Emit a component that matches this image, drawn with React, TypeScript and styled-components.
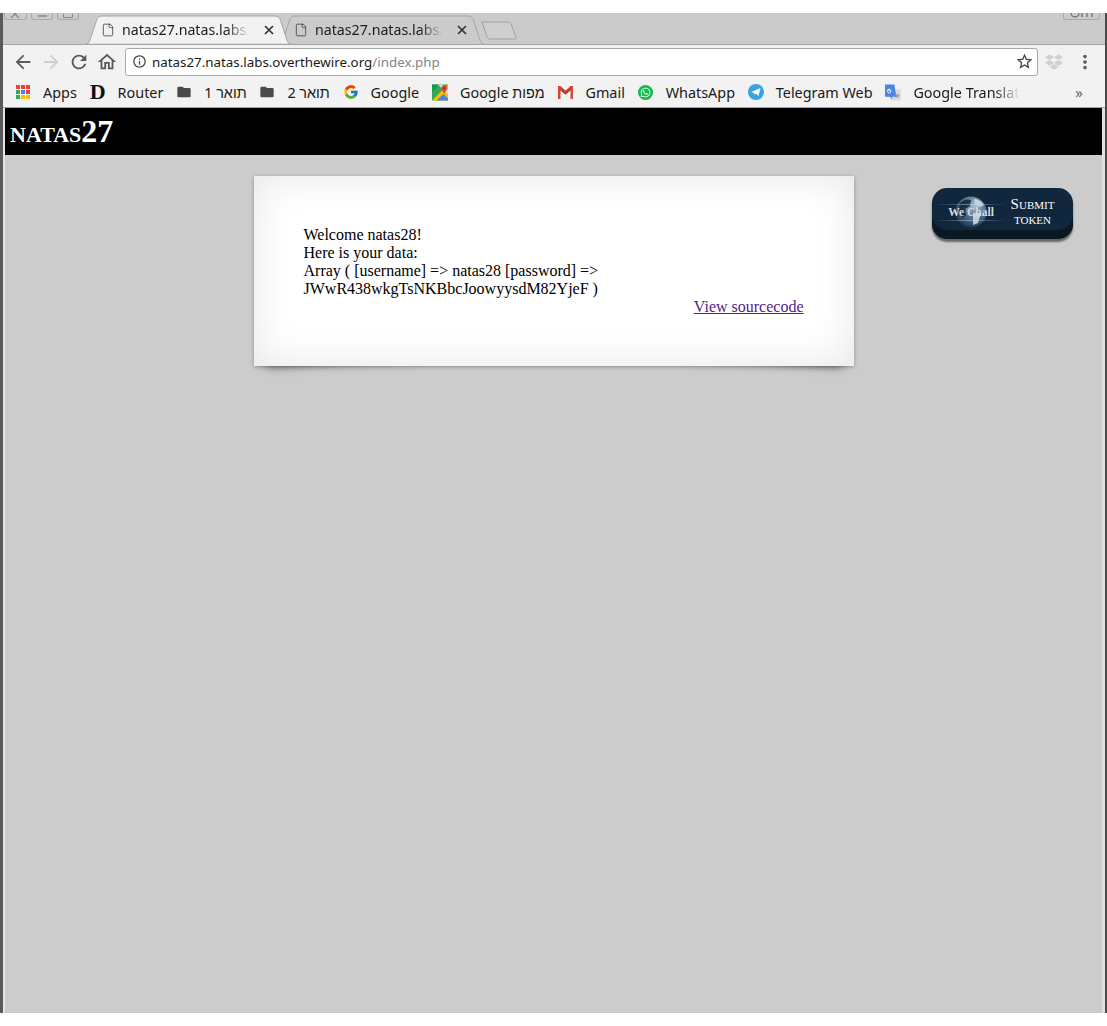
import styled, { createGlobalStyle } from "styled-components";
import { ReactNode } from "react";
import {
  MdArrowBack,
  MdArrowForward,
  MdRefresh,
  MdOutlineHome,
  MdStarBorder,
  MdInfoOutline,
  MdFolder,
  MdMoreVert,
} from "react-icons/md";
import { FcGoogle } from "react-icons/fc";
import { FaWhatsapp, FaDropbox } from "react-icons/fa";
import { LuFile } from "react-icons/lu";

const GlobalStyle = createGlobalStyle`
  html, body {
    margin: 0;
    padding: 0;
    background: #fff;
  }
`;

const Screen = styled.div`
  width: 1107px;
  height: 1026px;
  padding-top: 13px;
  box-sizing: border-box;
  background: #fff;
  overflow: hidden;
`;

const Win = styled.div`
  height: 1000px;
  display: flex;
  flex-direction: column;
  box-sizing: border-box;
  background: #cbcbcb;
  border-left: 3px solid #5a5a5a;
  border-right: 2px solid #4a4a4a;
  font-family: "Noto Sans", "Liberation Sans", sans-serif;
  color: #1a1a1a;
`;

const TabStrip = styled.div`
  height: 31px;
  flex: none;
  display: flex;
  align-items: flex-start;
`;

const Controls = styled.div`
  display: flex;
  gap: 4px;
  margin-left: 1px;
  width: 82px;
  flex: none;
`;

const CtrlBox = styled.div<{ $w: number }>`
  width: ${(p) => p.$w}px;
  height: 7px;
  box-sizing: border-box;
  border: 1px solid #a9a9a9;
  border-top: none;
  border-radius: 0 0 3px 3px;
  display: flex;
  justify-content: center;
  align-items: flex-end;
  overflow: hidden;
  color: #777;
`;

const RightCtrlBox = styled(CtrlBox)`
  margin-left: auto;
  margin-right: 5px;
`;

const TabShape = styled.svg`
  position: absolute;
  left: 0;
  top: 0;
  width: 100%;
  height: 100%;
  z-index: -1;
`;

const Tab = styled.div<{ $active?: boolean }>`
  position: relative;
  z-index: ${(p) => (p.$active ? 2 : 1)};
  width: 205px;
  height: 29px;
  flex: none;
  margin-top: 2px;
  margin-left: ${(p) => (p.$active ? 0 : -12)}px;
  padding-left: 15px;
  box-sizing: border-box;
  display: flex;
  align-items: center;
  isolation: isolate;
  color: #333;
`;

const TabTitle = styled.span`
  width: 132px;
  margin-left: 7px;
  overflow: hidden;
  white-space: nowrap;
  font-size: 14.2px;
  color: #1c1c1c;
  mask-image: linear-gradient(to right, #000 104px, transparent 128px);
`;

const TabClose = styled.svg`
  width: 10px;
  height: 10px;
  margin-left: 10px;
`;

const NewTab = styled.svg`
  width: 36px;
  height: 19px;
  flex: none;
  margin-top: 8px;
  margin-left: -3px;
`;

const Toolbar = styled.div`
  height: 32px;
  flex: none;
  display: flex;
  align-items: center;
  box-sizing: border-box;
  padding: 2px 0 0 6px;
  background: #f2f2f2;
  border-top: 1px solid #a6a6a6;
  color: #5a5a5a;
  position: relative;
  z-index: 0;
`;

const NavBtn = styled.div<{ $off?: boolean }>`
  width: 28px;
  height: 26px;
  flex: none;
  display: flex;
  align-items: center;
  justify-content: center;
  font-size: 22px;
  color: ${(p) => (p.$off ? "#d0d0d0" : "#5a5a5a")};
`;

const Omnibox = styled.div`
  width: 913px;
  height: 28px;
  margin-left: 4px;
  flex: none;
  box-sizing: border-box;
  background: #fff;
  border: 1px solid #a9a9a9;
  border-radius: 3px;
  display: flex;
  align-items: center;
  padding: 0 3px 0 6px;
  font-size: 13.35px;
  color: #1a1a1a;
`;

const Host = styled.span`
  margin-left: 5px;
`;

const Path = styled.span`
  color: #80868b;
  flex: 1;
`;

const ExtBtn = styled(NavBtn)`
  margin-left: 2px;
  font-size: 18px;
`;

const MenuBtn = styled(NavBtn)`
  margin-left: 3px;
  font-size: 22px;
  color: #5f5f5f;
`;

const Bookmarks = styled.div`
  height: 32px;
  flex: none;
  display: flex;
  align-items: center;
  box-sizing: border-box;
  padding: 1px 0 0 12px;
  background: #f2f2f2;
  border-bottom: 1px solid #a0a0a0;
`;

const Mark = styled.div`
  display: flex;
  align-items: center;
  gap: 12px;
  margin-right: 12.8px;
  flex: none;
  font-size: 14.4px;
  white-space: nowrap;
`;

const MarkIcon = styled.span<{ $color?: string }>`
  width: 16px;
  height: 16px;
  flex: none;
  display: flex;
  align-items: center;
  justify-content: center;
  font-size: 16px;
  color: ${(p) => p.$color || "#4a4a4a"};
`;

const MarkText = styled.span<{ $rtl?: boolean }>`
  direction: ${(p) => (p.$rtl ? "rtl" : "ltr")};
`;

const FadedText = styled.span`
  width: 107px;
  overflow: hidden;
  mask-image: linear-gradient(to right, #000 82px, transparent 107px);
`;

const DLogo = styled.span`
  font-family: "Liberation Serif", serif;
  font-weight: 700;
  font-size: 22px;
  line-height: 16px;
  color: #111;
`;

const WhatsBadge = styled.span`
  width: 15px;
  height: 15px;
  border-radius: 50%;
  background: #12b84a;
  display: flex;
  align-items: center;
  justify-content: center;
  font-size: 11px;
  color: #fff;
`;

const More = styled.span`
  margin-left: 42px;
  font-size: 15px;
  color: #666;
`;

const Page = styled.div`
  flex: 1;
  position: relative;
  z-index: 0;
  display: flex;
  flex-direction: column;
  background: #ccc;
  border-left: 2px solid #e4e4e4;
  border-right: 3px solid #e0e0e0;
  font-family: "Liberation Serif", "Times New Roman", serif;
  color: #000;
  font-size: 16px;
`;

const Banner = styled.h1`
  margin: 0;
  height: 47px;
  flex: none;
  box-sizing: border-box;
  padding: 5px 0 0 5px;
  background: #000;
  color: #fff;
  font-size: 32px;
  line-height: 36px;
  font-weight: 700;
  font-variant: small-caps;
`;

const Main = styled.div`
  flex: 1;
  display: flex;
  justify-content: center;
  align-items: flex-start;
  padding-top: 21px;
`;

const Card = styled.div`
  position: relative;
  width: 600px;
  box-sizing: border-box;
  padding: 50px;
  background: #fff;
  box-shadow: 0 1px 4px rgba(0, 0, 0, 0.3), 0 0 40px rgba(0, 0, 0, 0.1) inset;
  line-height: 18px;

  &::before,
  &::after {
    content: "";
    position: absolute;
    z-index: -2;
    bottom: 19px;
    width: 32%;
    height: 20%;
    box-shadow: 0 15px 10px rgba(0, 0, 0, 0.55);
  }
  &::before {
    left: 10px;
    transform: rotate(-3deg);
  }
  &::after {
    right: 10px;
    transform: rotate(3deg);
  }
`;

const SourceLink = styled.a`
  display: block;
  text-align: right;
  color: #551a8b;
  text-decoration: underline;
`;

const TokenButton = styled.div`
  position: absolute;
  top: 80px;
  right: 29px;
  width: 141px;
  height: 51px;
  box-sizing: border-box;
  display: flex;
  border-radius: 15px;
  background: #11273e;
  box-shadow: inset 0 -9px 0 #0b1824, 0 3px 2px rgba(0, 0, 0, 0.5);
  color: #fff;
  font-family: "Liberation Serif", serif;
`;

const Badge = styled.div`
  position: relative;
  width: 78px;
  flex: none;
`;

const BadgeArt = styled.svg`
  position: absolute;
  left: 0;
  top: 7px;
  width: 78px;
  height: 34px;
`;

const BadgeText = styled.span`
  position: absolute;
  left: 0;
  right: 0;
  top: 18px;
  text-align: center;
  font-size: 11.5px;
  line-height: 13px;
  font-weight: 700;
  color: #d5dbe2;
`;

const SubmitText = styled.div`
  flex: 1;
  padding: 9px 18px 0 0;
  text-align: center;
  font-variant: small-caps;
  line-height: 15px;
  font-size: 15px;
`;

const TokenLine = styled.div`
  font-size: 15px;
`;

const AppsIcon = () => {
  const colors = ["#ea4335", "#ea4335", "#ea4335", "#34a853", "#4285f4", "#ea4335", "#34a853", "#fbbc05", "#fbbc05"];
  return (
    <svg width="14" height="14" viewBox="0 0 14 14">
      {colors.map((c, i) => (
        <rect key={i} x={(i % 3) * 5} y={Math.floor(i / 3) * 5} width="4" height="4" fill={c} />
      ))}
    </svg>
  );
};

const MapsIcon = () => (
  <svg width="17" height="17" viewBox="0 0 17 17">
    <rect width="17" height="17" fill="#34a853" />
    <path d="M0 17 L17 0 V17 Z" fill="#fbbc05" />
    <path d="M5 17 L12 10 L17 15 V17 Z" fill="#4285f4" />
    <path d="M0 0 H8 L0 8 Z" fill="#0f9d58" />
    <path d="M6 0 L17 11 V6 L11 0 Z" fill="#d8d8d8" />
    <path d="M13 1 a3 3 0 0 1 3 3 c0 2-2 3-3 6 c-1-3-3-4-3-6 a3 3 0 0 1 3-3 Z" fill="#db4437" />
    <circle cx="13" cy="4" r="1" fill="#8f2a20" />
  </svg>
);

const GmailIcon = () => (
  <svg width="15" height="13" viewBox="0 0 15 13">
    <path d="M0 0 H2.500 L7.500 4.500 L12.500 0 H15 V13 H12.500 V4.200 L7.500 8.500 L2.500 4.200 V13 H0 Z" fill="#d0483b" />
    <path d="M2.500 4.200 V2.200 L7.500 6.500 L12.500 2.200 V4.200 L7.500 8.500 Z" fill="#b5352b" />
  </svg>
);

const TelegramIcon = () => (
  <svg width="16" height="16" viewBox="0 0 16 16">
    <circle cx="8" cy="8" r="8" fill="#37a3e0" />
    <path d="M3 8 L12.500 4 L10.500 12 L7.800 9.600 L6.500 11.200 L6.200 9 Z" fill="#fff" />
  </svg>
);

const TranslateIcon = () => (
  <svg width="17" height="17" viewBox="0 0 17 17">
    <rect x="6" y="5" width="11" height="12" fill="#dcdcdc" />
    <path d="M0 0 H10 L12 13 H7 L8 16 L5 13 H0 Z" fill="#4a86e8" />
    <path d="M3 6 h3 v2.200 a2 2 0 1 1 -.6 -3" fill="none" stroke="#fff" strokeWidth="1" />
    <path d="M13 9 l.9 2 h2 l-1.600 1.300 .6 2.100 -1.900-1.200 -1.900 1.200 .6-2.100 -1.600-1.300 h2 Z" fill="#9a9a9a" />
  </svg>
);

const Globe = () => (
  <BadgeArt viewBox="0 0 78 34">
    <defs>
      <radialGradient id="globe" cx="60%" cy="30%" r="75%">
        <stop offset="0" stopColor="#a9bccd" />
        <stop offset="0.55" stopColor="#4a6a88" />
        <stop offset="1" stopColor="#183148" />
      </radialGradient>
      <linearGradient id="streak" x1="0" x2="1" y1="0" y2="0">
        <stop offset="0" stopColor="#8aa3bb" stopOpacity="0" />
        <stop offset="0.5" stopColor="#c4d3e0" stopOpacity="0.55" />
        <stop offset="1" stopColor="#8aa3bb" stopOpacity="0" />
      </linearGradient>
    </defs>
    <circle cx="39" cy="17" r="15.500" fill="url(#globe)" />
    <path d="M28 8 c5-4 8-4 11-3 l-1 6 -5 3 1 6 -3 3 c-3-3-5-9-3-15 Z" fill="#14293f" opacity="0.9" />
    <path d="M42 4 c4 0 8 3 10 6 l-4 2 -5-2 Z M41 18 l8 0 -3 10 -5 2 Z" fill="#d5dfe8" opacity="0.85" />
    <rect x="2" y="9" width="74" height="1" fill="url(#streak)" />
    <rect x="2" y="25" width="74" height="1" fill="url(#streak)" />
  </BadgeArt>
);

const TabOutline = ({ active }: { active?: boolean }) => (
  <TabShape viewBox="0 0 205 29" preserveAspectRatio="none">
    <path
      d="M0 28.500 H1 C3 28.500 3.500 27 4 25 L11 4 C12 2 13 1 16 1 H189 C192 1 193 2 194 4 L201 25 C201.500 27 202 28.500 204 28.500 H205"
      fill={active ? "#f2f2f2" : "#cbcbcb"}
      stroke="#a6a6a6"
      strokeWidth="1"
    />
  </TabShape>
);

const CloseIcon = () => (
  <TabClose viewBox="0 0 10 10">
    <path d="M1 1 L9 9 M9 1 L1 9" stroke="#333" strokeWidth="1.700" />
  </TabClose>
);

const BrowserTab = ({ active }: { active?: boolean }) => (
  <Tab $active={active}>
    <TabOutline active={active} />
    <LuFile size={14} strokeWidth={1.3} />
    <TabTitle>natas27.natas.labs.overthewire.org</TabTitle>
    <CloseIcon />
  </Tab>
);

const Bookmark = ({ icon, children }: { icon: ReactNode; children: ReactNode }) => (
  <Mark>
    <MarkIcon>{icon}</MarkIcon>
    {children}
  </Mark>
);

const App = () => {
  return (
    <Screen>
      <GlobalStyle />
      <Win>
        <TabStrip>
          <Controls>
            <CtrlBox $w={23}>
              <svg width="9" height="6" viewBox="0 0 9 6">
                <path d="M0 -3 L8 5 M8 -3 L0 5" stroke="#888" strokeWidth="1.3" />
              </svg>
            </CtrlBox>
            <CtrlBox $w={22}>
              <svg width="9" height="4" viewBox="0 0 9 4">
                <rect width="9" height="2" fill="#999" />
              </svg>
            </CtrlBox>
            <CtrlBox $w={22}>
              <svg width="10" height="5" viewBox="0 0 10 5">
                <path d="M.5 0 V3.500 H9.500 V0" fill="none" stroke="#888" />
              </svg>
            </CtrlBox>
          </Controls>
          <BrowserTab active />
          <BrowserTab />
          <NewTab viewBox="0 0 36 19">
            <path
              d="M1 1 H26 C28 1 29 2 30 3 L35 16 C35.500 17.500 35 18 33 18 H9 C7 18 6.500 17 6 16 Z"
              fill="#cfcfcf"
              stroke="#a0a0a0"
            />
          </NewTab>
          <RightCtrlBox $w={37}>
            <svg width="24" height="6" viewBox="0 0 24 6">
              <path d="M1 0 a4 4 0 0 0 8 0 M12 0 V4 M17 0 V4 M22 0 V4" fill="none" stroke="#777" strokeWidth="1.400" />
            </svg>
          </RightCtrlBox>
        </TabStrip>

        <Toolbar>
          <NavBtn><MdArrowBack /></NavBtn>
          <NavBtn $off><MdArrowForward /></NavBtn>
          <NavBtn><MdRefresh /></NavBtn>
          <NavBtn><MdOutlineHome /></NavBtn>
          <Omnibox>
            <MdInfoOutline size={15} color="#444" />
            <Host>natas27.natas.labs.overthewire.org</Host>
            <Path>/index.php</Path>
            <MdStarBorder size={19} color="#444" />
          </Omnibox>
          <ExtBtn $off><FaDropbox /></ExtBtn>
          <MenuBtn><MdMoreVert /></MenuBtn>
        </Toolbar>

        <Bookmarks>
          <Bookmark icon={<AppsIcon />}><MarkText>Apps</MarkText></Bookmark>
          <Bookmark icon={<DLogo>D</DLogo>}><MarkText>Router</MarkText></Bookmark>
          <Bookmark icon={<MdFolder />}><MarkText $rtl>תואר 1</MarkText></Bookmark>
          <Bookmark icon={<MdFolder />}><MarkText $rtl>תואר 2</MarkText></Bookmark>
          <Bookmark icon={<FcGoogle />}><MarkText>Google</MarkText></Bookmark>
          <Bookmark icon={<MapsIcon />}><MarkText>Google מפות</MarkText></Bookmark>
          <Bookmark icon={<GmailIcon />}><MarkText>Gmail</MarkText></Bookmark>
          <Bookmark icon={<WhatsBadge><FaWhatsapp /></WhatsBadge>}><MarkText>WhatsApp</MarkText></Bookmark>
          <Bookmark icon={<TelegramIcon />}><MarkText>Telegram Web</MarkText></Bookmark>
          <Bookmark icon={<TranslateIcon />}><FadedText>Google Translate</FadedText></Bookmark>
          <More>»</More>
        </Bookmarks>

        <Page>
          <Banner>natas27</Banner>
          <Main>
            <Card>
              Welcome natas28!
              <br />
              Here is your data:
              <br />
              Array ( [username] =&gt; natas28 [password] =&gt; JWwR438wkgTsNKBbcJoowyysdM82YjeF )
              <br />
              <SourceLink href="#">View sourcecode</SourceLink>
            </Card>
          </Main>
          <TokenButton>
            <Badge>
              <Globe />
              <BadgeText>We Chall</BadgeText>
            </Badge>
            <SubmitText>
              Submit
              <TokenLine>token</TokenLine>
            </SubmitText>
          </TokenButton>
        </Page>
      </Win>
    </Screen>
  );
};

export default App;
